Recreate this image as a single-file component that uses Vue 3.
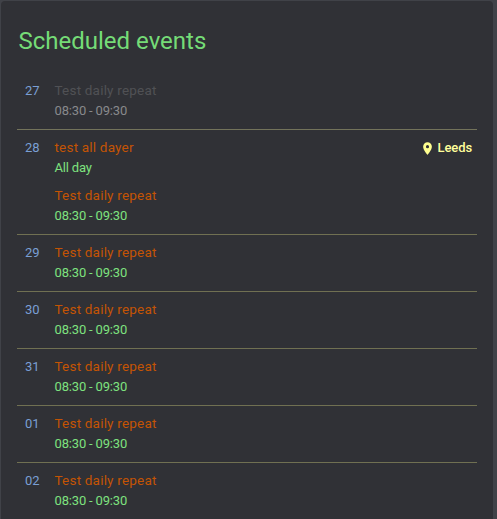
<script setup>
const daily = { title: 'Test daily repeat', time: '08:30 - 09:30' }

const days = [
  { date: '27', past: true, events: [daily] },
  { date: '28', events: [{ title: 'test all dayer', time: 'All day', location: 'Leeds' }, daily] },
  { date: '29', events: [daily] },
  { date: '30', events: [daily] },
  { date: '31', events: [daily] },
  { date: '01', events: [daily] },
  { date: '02', events: [daily] },
]
</script>

<template>
  <div class="page">
    <section class="card">
      <h1 class="heading">Scheduled events</h1>
      <div v-for="day in days" :key="day.date" class="day" :class="{ past: day.past }">
        <div class="date">{{ day.date }}</div>
        <div class="events">
          <div v-for="event in day.events" :key="event.title" class="event">
            <div class="info">
              <div class="title">{{ event.title }}</div>
              <div class="time">{{ event.time }}</div>
            </div>
            <div v-if="event.location" class="location">
              <svg class="pin" viewBox="0 0 24 24">
                <path d="M12 11.5A2.5 2.5 0 0 1 9.5 9 2.5 2.5 0 0 1 12 6.5A2.5 2.5 0 0 1 14.5 9 2.5 2.5 0 0 1 12 11.5M12 2A7 7 0 0 0 5 9c0 5.25 7 13 7 13s7-7.75 7-13a7 7 0 0 0-7-7z" />
              </svg>
              <span class="place">{{ event.location }}</span>
            </div>
          </div>
        </div>
      </div>
    </section>
  </div>
</template>

<style>
body {
  background: #414349;
  overflow: hidden;
}
</style>

<style scoped>
.page {
  box-sizing: border-box;
  height: 519px;
  padding: 1px 4px 0 1px;
  overflow: hidden;
  font-family: Roboto, sans-serif;
  background: #404248;
}
.card {
  box-sizing: border-box;
  height: 524px;
  padding: 16px;
  border-radius: 4px;
  background: #303136;
}
.heading {
  margin: 0;
  height: 56px;
  padding-left: 1.5px;
  font-size: 24px;
  font-weight: 400;
  line-height: 48px;
  color: #75dc77;
}
.day {
  display: flex;
  padding: 8px 0;
  border-bottom: 1px solid #707052;
  line-height: 20px;
}
.day.past {
  border-color: #73735b;
}
.day:last-child {
  border-bottom: none;
}
.date {
  width: 37.5px;
  box-sizing: border-box;
  padding-left: 8px;
  font-size: 13px;
  letter-spacing: -0.1px;
  color: #7a9fd4;
}
.events {
  flex: 1;
  display: flex;
  flex-direction: column;
  gap: 8px;
}
.event {
  display: flex;
  justify-content: space-between;
}
.title {
  height: 20px;
  font-size: 13.5px;
  letter-spacing: 0.2px;
  line-height: 18px;
  color: #c45404;
}
.time {
  font-size: 13px;
  letter-spacing: -0.17px;
  color: #7ee27f;
}
.past .title {
  color: #505155;
}
.past .time {
  color: #88898c;
}
.location {
  display: flex;
  align-items: center;
  height: 20px;
  padding-right: 5px;
  gap: 3px;
  font-size: 13px;
  font-weight: 500;
  color: #ffff9c;
}
.place {
  letter-spacing: -0.1px;
}
.pin {
  width: 15px;
  height: 15px;
  fill: #ffff90;
}
</style>
